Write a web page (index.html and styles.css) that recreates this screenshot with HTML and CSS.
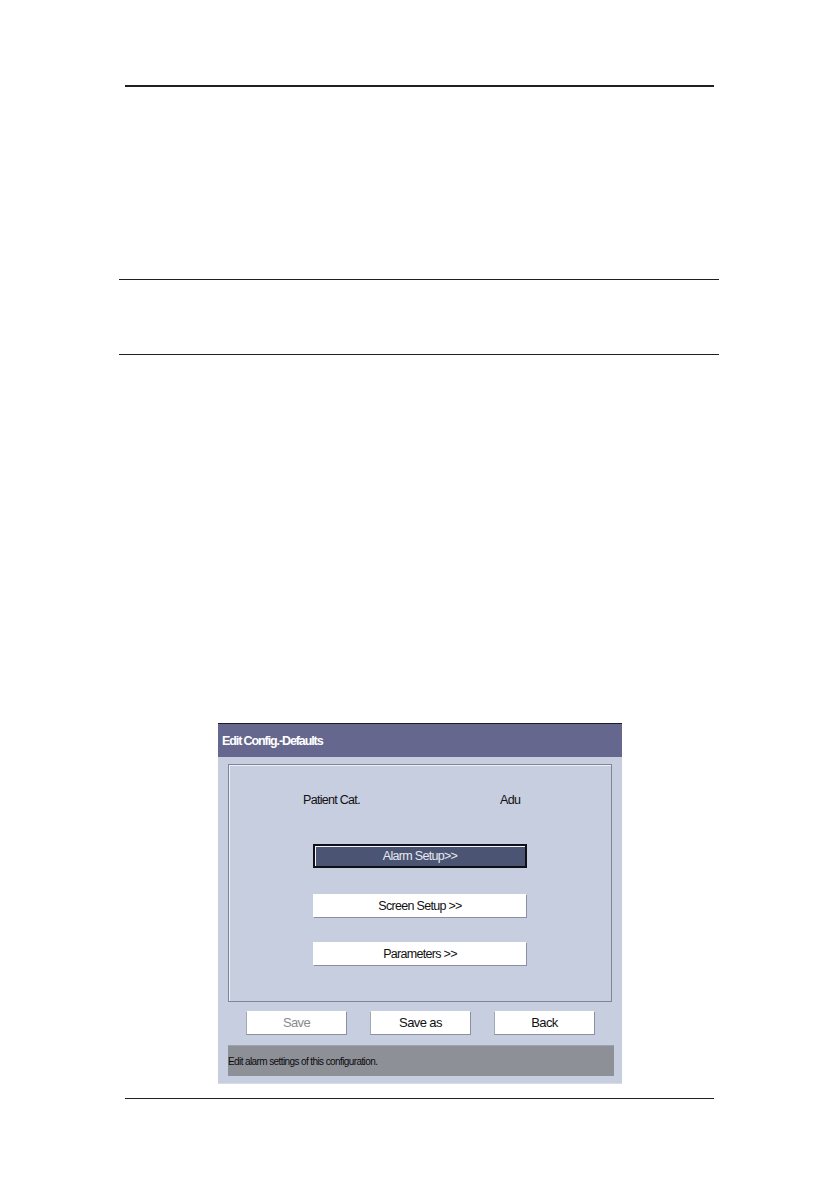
FILE: index.html
```html
<!DOCTYPE html>
<html>
<head>
<meta charset="utf-8">
<link rel="stylesheet" href="styles.css">
</head>
<body>
<div class="page">
  <div class="rule rule-top"></div>
  <div class="rule rule-wide rule-a"></div>
  <div class="rule rule-wide rule-b"></div>

  <div class="dialog">
    <div class="titlebar">Edit Config.-Defaults</div>
    <div class="dialog-body">
      <div class="panel">
        <div class="field-row">
          <span class="field-label">Patient Cat.</span>
          <span class="field-value">Adu</span>
        </div>
        <div class="menu-btn selected">Alarm Setup&gt;&gt;</div>
        <div class="menu-btn second">Screen Setup &gt;&gt;</div>
        <div class="menu-btn third">Parameters &gt;&gt;</div>
      </div>
      <div class="actions">
        <div class="act-btn disabled">Save</div>
        <div class="act-btn">Save as</div>
        <div class="act-btn">Back</div>
      </div>
      <div class="status">Edit alarm settings of this configuration.</div>
    </div>
  </div>

  <div class="rule rule-bottom"></div>
</div>
</body>
</html>
```

FILE: styles.css
```css
html, body {
  margin: 0;
  padding: 0;
  background: #ffffff;
}

.page {
  width: 840px;
  height: 1190px;
  overflow: hidden;
  font-family: "Liberation Sans", Arial, sans-serif;
}

.rule {
  height: 1.5px;
  background: #231f20;
}

.rule-top {
  margin-top: 85px;
  margin-left: 125px;
  width: 589px;
}

.rule-wide {
  margin-left: 119px;
  width: 600px;
}

.rule-a {
  margin-top: 192px;
}

.rule-b {
  margin-top: 73.5px;
}

.rule-bottom {
  margin-top: 14px;
  margin-left: 125px;
  width: 589px;
}

.dialog {
  margin-top: 367.5px;
  margin-left: 218px;
  width: 404px;
  border-top: 1px solid #1c1c24;
  border-bottom: 1px solid #d9dce3;
  background: #c6cee0;
}

.titlebar {
  height: 33px;
  background: #66678f;
  color: #ffffff;
  font-weight: bold;
  font-size: 12.5px;
  letter-spacing: -1.1px;
  line-height: 34px;
  padding-left: 4px;
}

.dialog-body {
  padding: 7px 8px 8px 10px;
  height: 311px;
  box-sizing: content-box;
}

.panel {
  width: 384px;
  height: 238px;
  box-sizing: border-box;
  border: 1px solid #7f8596;
  box-shadow: inset 1px 1px 0 #eef1f7;
  display: flex;
  flex-direction: column;
  align-items: center;
}

.field-row {
  align-self: stretch;
  display: flex;
  margin-top: 27px;
  height: 16px;
  line-height: 16px;
  font-size: 12.5px;
  letter-spacing: -0.7px;
  color: #111111;
  padding-left: 74px;
}

.field-label {
  width: 197px;
}

.menu-btn {
  width: 214px;
  height: 24px;
  box-sizing: border-box;
  background: #ffffff;
  border: 1px solid #ffffff;
  border-right-color: #8b90a0;
  border-bottom-color: #8b90a0;
  text-align: center;
  font-size: 12.5px;
  letter-spacing: -0.7px;
  line-height: 22px;
  color: #111111;
}

.menu-btn.selected {
  margin-top: 36px;
  background: #4b5573;
  border: 2px solid #0e1016;
  box-shadow: inset 1px 1px 0 #f2f4fa;
  color: #e6e9f2;
  line-height: 20px;
}

.menu-btn.second {
  margin-top: 26px;
}

.menu-btn.third {
  margin-top: 24px;
}

.actions {
  display: flex;
  justify-content: center;
  gap: 23px;
  margin-top: 9px;
  width: 385px;
}

.act-btn {
  width: 101px;
  height: 24px;
  box-sizing: border-box;
  background: #ffffff;
  border: 1px solid #ffffff;
  border-right-color: #8b90a0;
  border-bottom-color: #8b90a0;
  border-left-color: #a3a8b6;
  text-align: center;
  font-size: 13px;
  letter-spacing: -0.6px;
  line-height: 22px;
  color: #111111;
}

.act-btn.disabled {
  color: #8a8a8e;
}

.status {
  margin-top: 10px;
  width: 386px;
  height: 31px;
  background: #8e9097;
  border-top: 1px solid #9ea2aa;
  box-sizing: border-box;
  font-size: 10px;
  letter-spacing: -0.6px;
  line-height: 31px;
  color: #0c0c10;
}
```
